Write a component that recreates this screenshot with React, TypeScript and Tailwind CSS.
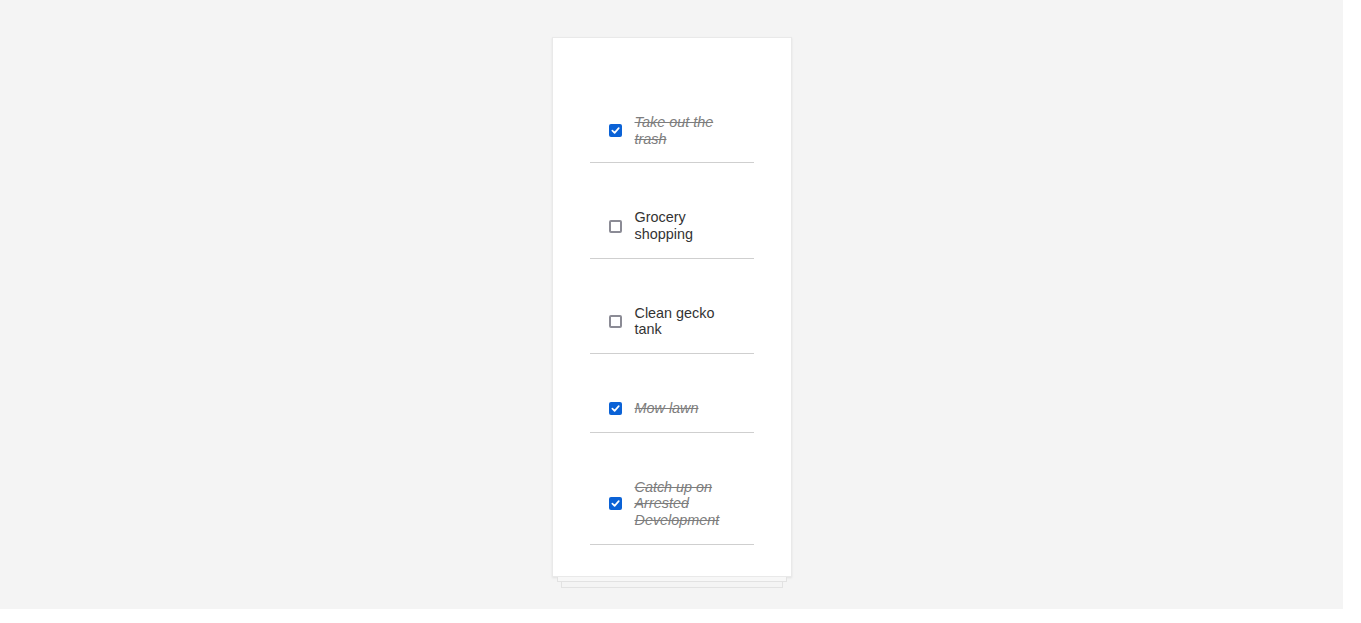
const todos = [
  { id: 1, text: 'Take out the trash', done: true },
  { id: 2, text: 'Grocery shopping', done: false },
  { id: 3, text: 'Clean gecko tank', done: false },
  { id: 4, text: 'Mow lawn', done: true },
  { id: 5, text: 'Catch up on Arrested Development', done: true },
]

function Checkbox({ checked }: { checked: boolean }) {
  if (checked) {
    return (
      <span className="flex h-[13px] w-[13px] shrink-0 items-center justify-center rounded-[2px] bg-[#0b62d6]">
        <svg width="9" height="9" viewBox="0 0 10 10" fill="none">
          <path d="M1.5 5.2 L4 7.6 L8.6 2.4" stroke="white" strokeWidth="1.9" strokeLinecap="round" strokeLinejoin="round" />
        </svg>
      </span>
    )
  }
  return <span className="h-[13px] w-[13px] shrink-0 rounded-[2px] border-2 border-[#8b8b95] bg-white" />
}

export default function App() {
  return (
    <div className="flex w-[1343px] flex-col items-center bg-[#f4f4f4] pt-[37px] pb-[21px] font-['Liberation_Sans',Arial,sans-serif]">
      {/* main sheet */}
      <div className="w-[240px] border border-[#e9e9e9] bg-white px-[37px] pt-[30px] pb-[31px] shadow-[0_1px_2px_rgba(0,0,0,0.08)]">
        <ul>
          {todos.map((t) => (
            <li key={t.id} className="flex items-center border-b border-[#cfcfcf] pt-[46px] pb-[15px] pl-[19px] pr-[20px]">
              <Checkbox checked={t.done} />
              <span
                className={`ml-[13px] w-[100px] text-[14.4px] leading-[16.67px] ${
                  t.done ? 'italic text-[#7d7d7d] line-through' : 'text-[#333]'
                }`}
              >
                {t.text}
              </span>
            </li>
          ))}
        </ul>
      </div>
      {/* stacked paper underneath */}
      <div className="h-[5px] w-[230px] border border-t-0 border-[#e2e2e2] bg-[#f7f7f7]" />
      <div className="h-[6px] w-[222px] border border-t-0 border-[#e2e2e2] bg-[#f4f4f4]" />
    </div>
  )
}
